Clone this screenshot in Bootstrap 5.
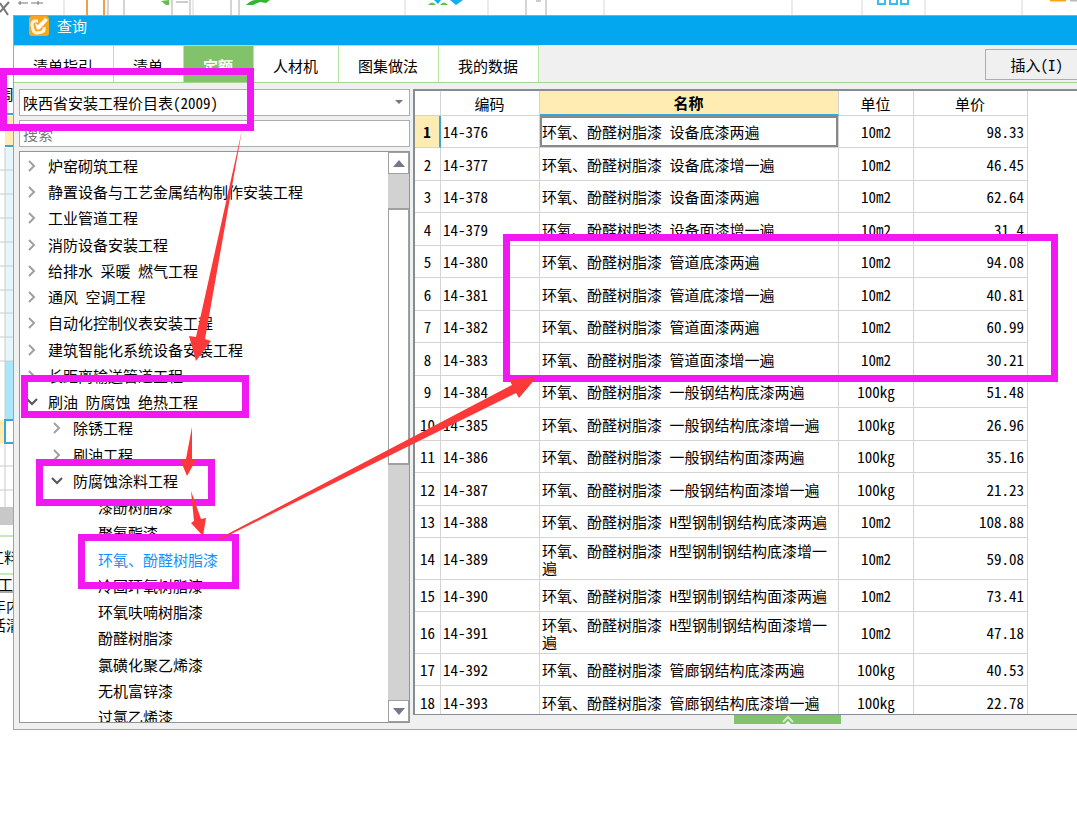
<!DOCTYPE html>
<html lang="zh-CN">
<head>
<meta charset="utf-8">
<meta name="viewport" content="width=device-width, initial-scale=1">
<title>查询</title>
<link href="https://cdn.jsdelivr.net/npm/bootstrap@5.3.0/dist/css/bootstrap.min.css" rel="stylesheet">
<style>
body{font-family:"Noto Sans Mono CJK SC","Noto Sans CJK SC",sans-serif;font-size:15px;line-height:18px;color:#000;background:#fff}
button,select,input{font-family:inherit;font-size:15px;line-height:18px}
.backdrop,.marks{position:absolute;left:0;top:0;pointer-events:none}
.marks{z-index:5}
.page{height:100vh;padding:15px 0 95px 13px}
.dialog{position:relative;background:#f0f0f0;border:1px solid #a3a3a3;border-right:0}
.titlebar{background:#02a7f0;color:#fff;height:29px;padding:0 15px 9px;gap:8px}
.toolbar{height:38px;border-bottom:1px solid #a3d68f}
.tab-btn{background:#fff;border:0;border-right:1px solid #b4e6a0;border-top:1px solid #b4e6a0;padding:3px 20px 0 19px}
.tab-btn.active{background:#81c26b;color:#fff;font-weight:bold}
.insert-btn{background:#f0f0f0;border:1px solid #adadad;border-right:0;height:31px;padding:0 14px 0 24px}
.work{padding:6px 0 0 5px;gap:3px;min-height:0}
.side{width:391px;flex:none;gap:4px;padding-bottom:6px}
.field{height:27px;border:1px solid #adadad;border-radius:0;background:#fff;padding:0 3px;color:#000}
.field::placeholder{color:#777}
.combo{appearance:none;background:#fff url("data:image/svg+xml,%3Csvg xmlns='http://www.w3.org/2000/svg' width='8' height='5'%3E%3Cpath d='M0 0h8L4 4z' fill='%23747884'/%3E%3C/svg%3E") no-repeat right 6px center}
.treebox{background:#fff;border:1px solid #8e979f;min-height:0}
.tree{list-style:none;margin:0;padding:1px 0 0;min-width:0}
.tree li{height:26px;padding-left:8px;display:flex;align-items:center;gap:12px;white-space:nowrap}
.tree li:nth-child(4n){height:27px}
.tree .lv1{padding-left:33px}
.tree .lv2{padding-left:78px}
.tree svg{width:8px;height:12px;flex:none;fill:none;stroke:#a0a0a0;stroke-width:2}
.tree .open svg{width:12px;height:8px;margin:0 -2px;stroke:#555}
.tree a{color:#000;text-decoration:none}
.tree .picked a{color:#1492ff}
.vbar{width:21px;flex:none;background:#d2d2d2}
.vbar button{height:22px;border:1px solid #a0a0a0;background:#fff;padding:0;display:flex;align-items:center;justify-content:center}
.thumb{flex:0 0 45%;margin-top:34px;background:#fff;border:1px solid #a0a0a0;border-width:2px 1px}
.main{min-width:0}
.gridbox{background:#fff;border:1px solid #858c96;border-width:2px 0 1px 2px;min-height:0}
.price{width:613px;table-layout:fixed;border-collapse:separate;border-spacing:0}
.price th,.price td{border-right:1px solid #d4d4d4;border-bottom:1px solid #d4d4d4;padding:0 3px 0 2px;font-weight:normal;height:32px;line-height:17px}
.price thead th{height:25px;text-align:center}
.price tbody tr:nth-child(even)>*{height:33px}
.price tbody tr.tall>*{height:42px}
.price tbody th,.price td:nth-child(4){text-align:center;padding:0}
.price td:nth-child(5){text-align:right}
.price thead th.hot{background:#ffecb3;font-weight:bold;border-bottom:2px solid #3aa5d8}
.price tbody th.hot{background:#ffecb3;font-weight:bold;border-right:2px solid #3aa5d8}
.price td.cell-on{box-shadow:inset 0 0 0 2px #888}
.foot{height:14px}
.fold{width:107px;height:9px;margin-left:321px;background:#81c26b;border:0;padding:0}
</style>
</head>
<body class="overflow-hidden">
<svg class="backdrop" width="1077" height="735" aria-hidden="true" fill="none">
  <path d="M64 0v15M193 0v15M405 0v15M488 0v15M604 0v15M792 0v15M862 0v15M925 0v15M1022 0v15" stroke="#d8d8d8"/>
  <path d="M87 0v15M104 0v15" stroke="#f0a040" stroke-width="2"/>
  <path d="M108 0v15M124 0v15M172 0v15M190 0v15M231 0v15M239 0v15M526 0v15M546 0v15" stroke="#aaa"/>
  <path d="M0 3l8 12M9 2L0 12" stroke="#777" stroke-width="2"/>
  <path d="M18 3h10M31 3h12M20 1v4M38 1v4" stroke="#777"/>
  <path d="M161 1l5 4h3V0z" fill="#67bd4a"/><path d="M176 2h12M536 1h5" stroke="#999"/>
  <path d="M246 5q5-5 10-5h14l-4 3-6-1-7 3z" fill="#30b82c"/>
  <path d="M428 5q4-5 8 0zM440 5q4-5 8 0z" fill="#67bd4a"/><path d="M434 0h7l-3 4zM450 0h13l-7 5z" fill="#10adf0"/>
  <path d="M878 0v4h7V0M890 0v4h7V0M901 0v4h7V0" stroke="#35bdf2" stroke-width="2"/>
  <path d="M1050 0h16" stroke="#ffa31a" stroke-width="3"/><path d="M1070 0h7" stroke="#bbb" stroke-width="3"/>
  <path d="M5 116h8v30H5z" fill="#ffecb3"/><path d="M0 114h13M5 146h8" stroke="#3aa5d8" stroke-width="2"/>
  <path d="M5 148h8v213H5z" fill="#e5f7fc"/><path d="M5 361h8v58H5z" fill="#abe7fa"/>
  <path d="M0 170h13M0 194h13M0 218h13M0 242h13M0 266h13M0 290h13M0 313h13M0 337h13M0 361h13M5 148v271M0 466h13M0 490h13M5 443v64" stroke="#ccc"/>
  <path d="M0 420h4v23H0z" fill="#ffecb3"/><path d="M13 420H5v23h8" stroke="#3aa5d8" stroke-width="2"/>
  <path d="M0 507h13v18H0z" fill="#c8c8c8"/>
  <path d="M0 536h13M0 574h13" stroke="#90d080"/><path d="M0 592h13" stroke="#555"/>
  <g fill="#000"><text x="-1" y="100">周</text><text x="-11" y="563">工料</text><text x="-2" y="590">工</text><text x="-9" y="612">年内</text><text x="-9" y="631">活清</text></g>
</svg>

<div class="page">
<main class="dialog h-100 d-flex flex-column">
  <header class="titlebar d-flex align-items-center flex-shrink-0">
    <svg width="20" height="20" viewBox="0 0 20 20"><rect width="20" height="20" rx="3" fill="#fba51e"/><path d="M9 5H6Q3 5 3 9l1 5q1 3 4 3l5-1q3-1 2-5" fill="none" stroke="#fff3d8" stroke-width="3"/><path d="M6 7l3 2 7-7 3 2-8 9-3 1z" fill="#fff"/></svg>
    <span>查询</span>
  </header>
  <div class="toolbar d-flex flex-shrink-0">
    <nav class="d-flex">
      <button class="tab-btn" type="button">清单指引</button><button class="tab-btn" type="button">清单</button><button class="tab-btn active" type="button">定额</button><button class="tab-btn" type="button">人材机</button><button class="tab-btn" type="button">图集做法</button><button class="tab-btn" type="button">我的数据</button>
    </nav>
    <button class="insert-btn ms-auto mt-1" type="button">插入(I)</button>
  </div>
  <div class="work d-flex flex-grow-1">
    <section class="side d-flex flex-column">
      <select class="field combo w-100 flex-shrink-0" aria-label="价目表"><option>陕西省安装工程价目表(2009)</option></select>
      <input class="field w-100 flex-shrink-0" type="text" placeholder="搜索" aria-label="搜索">
      <div class="treebox d-flex flex-grow-1 overflow-hidden">
        <ul class="tree flex-grow-1">
          <li><svg><path d="M1 1l5 5-5 5"/></svg><a href="#">炉窑砌筑工程</a></li>
          <li><svg><path d="M1 1l5 5-5 5"/></svg><a href="#">静置设备与工艺金属结构制作安装工程</a></li>
          <li><svg><path d="M1 1l5 5-5 5"/></svg><a href="#">工业管道工程</a></li>
          <li><svg><path d="M1 1l5 5-5 5"/></svg><a href="#">消防设备安装工程</a></li>
          <li><svg><path d="M1 1l5 5-5 5"/></svg><a href="#">给排水 采暖 燃气工程</a></li>
          <li><svg><path d="M1 1l5 5-5 5"/></svg><a href="#">通风 空调工程</a></li>
          <li><svg><path d="M1 1l5 5-5 5"/></svg><a href="#">自动化控制仪表安装工程</a></li>
          <li><svg><path d="M1 1l5 5-5 5"/></svg><a href="#">建筑智能化系统设备安装工程</a></li>
          <li><svg><path d="M1 1l5 5-5 5"/></svg><a href="#">长距离输送管道工程</a></li>
          <li class="open"><svg><path d="M1 1l5 5 5-5"/></svg><a href="#">刷油 防腐蚀 绝热工程</a></li>
          <li class="lv1"><svg><path d="M1 1l5 5-5 5"/></svg><a href="#">除锈工程</a></li>
          <li class="lv1"><svg><path d="M1 1l5 5-5 5"/></svg><a href="#">刷油工程</a></li>
          <li class="lv1 open"><svg><path d="M1 1l5 5 5-5"/></svg><a href="#">防腐蚀涂料工程</a></li>
          <li class="lv2"><a href="#">漆酚树脂漆</a></li>
          <li class="lv2"><a href="#">聚氨酯漆</a></li>
          <li class="lv2 picked"><a href="#">环氧、酚醛树脂漆</a></li>
          <li class="lv2"><a href="#">冷固环氧树脂漆</a></li>
          <li class="lv2"><a href="#">环氧呋喃树脂漆</a></li>
          <li class="lv2"><a href="#">酚醛树脂漆</a></li>
          <li class="lv2"><a href="#">氯磺化聚乙烯漆</a></li>
          <li class="lv2"><a href="#">无机富锌漆</a></li>
          <li class="lv2"><a href="#">过氯乙烯漆</a></li>
        </ul>
        <div class="vbar d-flex flex-column">
          <button type="button" aria-label="向上"><svg width="12" height="7"><path d="M0 7h12L6 0z" fill="#74788a"/></svg></button>
          <div class="thumb"></div>
          <button type="button" class="mt-auto" aria-label="向下"><svg width="12" height="7"><path d="M0 0h12L6 7z" fill="#74788a"/></svg></button>
        </div>
      </div>
    </section>
    <section class="main d-flex flex-column flex-grow-1">
      <div class="gridbox flex-grow-1 overflow-hidden">
        <table class="price">
          <colgroup><col style="width:26px"><col style="width:99px"><col style="width:299px"><col style="width:75px"><col style="width:114px"></colgroup>
          <thead><tr><th></th><th>编码</th><th class="hot">名称</th><th>单位</th><th>单价</th></tr></thead>
          <tbody>
            <tr><th class="hot">1</th><td>14-376</td><td class="cell-on">环氧、酚醛树脂漆 设备底漆两遍</td><td>10m2</td><td>98.33</td></tr>
            <tr><th>2</th><td>14-377</td><td>环氧、酚醛树脂漆 设备底漆增一遍</td><td>10m2</td><td>46.45</td></tr>
            <tr><th>3</th><td>14-378</td><td>环氧、酚醛树脂漆 设备面漆两遍</td><td>10m2</td><td>62.64</td></tr>
            <tr><th>4</th><td>14-379</td><td>环氧、酚醛树脂漆 设备面漆增一遍</td><td>10m2</td><td>31.4</td></tr>
            <tr><th>5</th><td>14-380</td><td>环氧、酚醛树脂漆 管道底漆两遍</td><td>10m2</td><td>94.08</td></tr>
            <tr><th>6</th><td>14-381</td><td>环氧、酚醛树脂漆 管道底漆增一遍</td><td>10m2</td><td>40.81</td></tr>
            <tr><th>7</th><td>14-382</td><td>环氧、酚醛树脂漆 管道面漆两遍</td><td>10m2</td><td>60.99</td></tr>
            <tr><th>8</th><td>14-383</td><td>环氧、酚醛树脂漆 管道面漆增一遍</td><td>10m2</td><td>30.21</td></tr>
            <tr><th>9</th><td>14-384</td><td>环氧、酚醛树脂漆 一般钢结构底漆两遍</td><td>100kg</td><td>51.48</td></tr>
            <tr><th>10</th><td>14-385</td><td>环氧、酚醛树脂漆 一般钢结构底漆增一遍</td><td>100kg</td><td>26.96</td></tr>
            <tr><th>11</th><td>14-386</td><td>环氧、酚醛树脂漆 一般钢结构面漆两遍</td><td>100kg</td><td>35.16</td></tr>
            <tr><th>12</th><td>14-387</td><td>环氧、酚醛树脂漆 一般钢结构面漆增一遍</td><td>100kg</td><td>21.23</td></tr>
            <tr><th>13</th><td>14-388</td><td>环氧、酚醛树脂漆 H型钢制钢结构底漆两遍</td><td>10m2</td><td>108.88</td></tr>
            <tr class="tall"><th>14</th><td>14-389</td><td>环氧、酚醛树脂漆 H型钢制钢结构底漆增一遍</td><td>10m2</td><td>59.08</td></tr>
            <tr><th>15</th><td>14-390</td><td>环氧、酚醛树脂漆 H型钢制钢结构面漆两遍</td><td>10m2</td><td>73.41</td></tr>
            <tr class="tall"><th>16</th><td>14-391</td><td>环氧、酚醛树脂漆 H型钢制钢结构面漆增一遍</td><td>10m2</td><td>47.18</td></tr>
            <tr><th>17</th><td>14-392</td><td>环氧、酚醛树脂漆 管廊钢结构底漆两遍</td><td>100kg</td><td>40.53</td></tr>
            <tr><th>18</th><td>14-393</td><td>环氧、酚醛树脂漆 管廊钢结构底漆增一遍</td><td>100kg</td><td>22.78</td></tr>
          </tbody>
        </table>
      </div>
      <div class="foot d-flex flex-shrink-0">
        <button class="fold d-flex justify-content-center" type="button" aria-label="展开"><svg width="12" height="9" fill="none"><path d="M1 7l5-5 5 5" stroke="#d5efcb" stroke-width="2"/><path d="M3 9l3-3 3 3z" fill="#fff"/></svg></button>
      </div>
    </section>
  </div>
</main>
</div>

<svg class="marks" width="1077" height="735" aria-hidden="true">
  <g fill="none" stroke="#f218f2" stroke-width="7"><path d="M3.500 71.500h247v56H3.500zM24.500 378.500h221v36h-221zM39.500 462.500h172v40h-172zM81.500 537.500h154v48h-154zM506.500 237.500h548v141h-548z"/></g>
  <g fill="#fd3838"><path d="M242 130L196 337l-7-1 7 25 15-20-6-2zM192 427l-6 32h-6l7 17 9-16-4-1zM191 491l3 30-3 2 12 13 3-18-5 1zM218 539l294-154-3-6 27-1-17 20-3-5-297 147z"/></g>
</svg>
<script src="https://cdn.jsdelivr.net/npm/bootstrap@5.3.0/dist/js/bootstrap.bundle.min.js"></script>
</body>
</html>
